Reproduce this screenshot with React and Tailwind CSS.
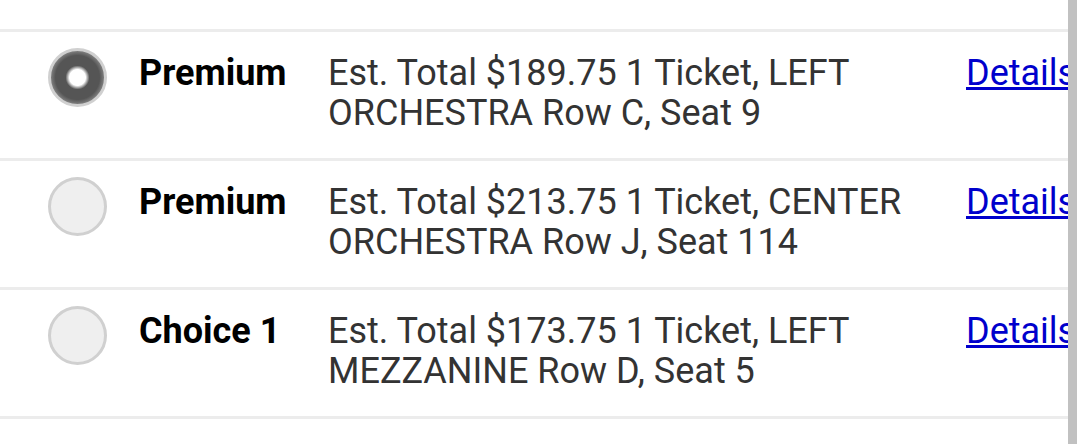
import React, { useState } from 'react';

const options = [
  { id: 1, label: 'Premium', desc: 'Est. Total $189.75 1 Ticket, LEFT ORCHESTRA Row C, Seat 9' },
  { id: 2, label: 'Premium', desc: 'Est. Total $213.75 1 Ticket, CENTER ORCHESTRA Row J, Seat 114' },
  { id: 3, label: 'Choice 1', desc: 'Est. Total $173.75 1 Ticket, LEFT MEZZANINE Row D, Seat 5' },
];

const Radio = ({ checked, onClick }) => (
  <button
    onClick={onClick}
    className={`mt-[-5px] w-[59px] h-[59px] shrink-0 rounded-full border-[3px] border-[#d0d0d0] ${
      checked
        ? 'bg-[radial-gradient(circle,#ffffff_0,#ffffff_8px,#555555_12px,#555555_22px,#7a7a7a_26px)]'
        : 'bg-[#efefef]'
    }`}
  />
);

export default function App() {
  const [selected, setSelected] = useState(1);

  return (
    <div className="w-[1077px] h-[444px] bg-white flex overflow-hidden" style={{ fontFamily: 'Roboto, "Liberation Sans", sans-serif' }}>
      <div className="flex-1 min-w-0 overflow-hidden pt-[29px]">
        <div className="border-t-[3px] border-[#ececec]">
          {options.map((o) => (
            <div key={o.id} className="flex items-start pl-[48px] pt-[21px] pb-[25px] border-b-[3px] border-[#ececec]">
              <Radio checked={selected === o.id} onClick={() => setSelected(o.id)} />
              <div className="w-[189px] shrink-0 ml-[32px] text-[36px] leading-[40px] font-bold text-black">
                {o.label}
              </div>
              <div className="w-[610px] shrink-0 text-[36px] leading-[40px] text-[#333333]">
                {o.desc}
              </div>
              <a href="#" className="ml-[28px] shrink-0 text-[36px] leading-[40px] text-[#0000cc] underline whitespace-nowrap">
                Details
              </a>
            </div>
          ))}
        </div>
      </div>
      <div className="w-[9px] shrink-0 bg-[#c1c1c1]" />
    </div>
  );
}
